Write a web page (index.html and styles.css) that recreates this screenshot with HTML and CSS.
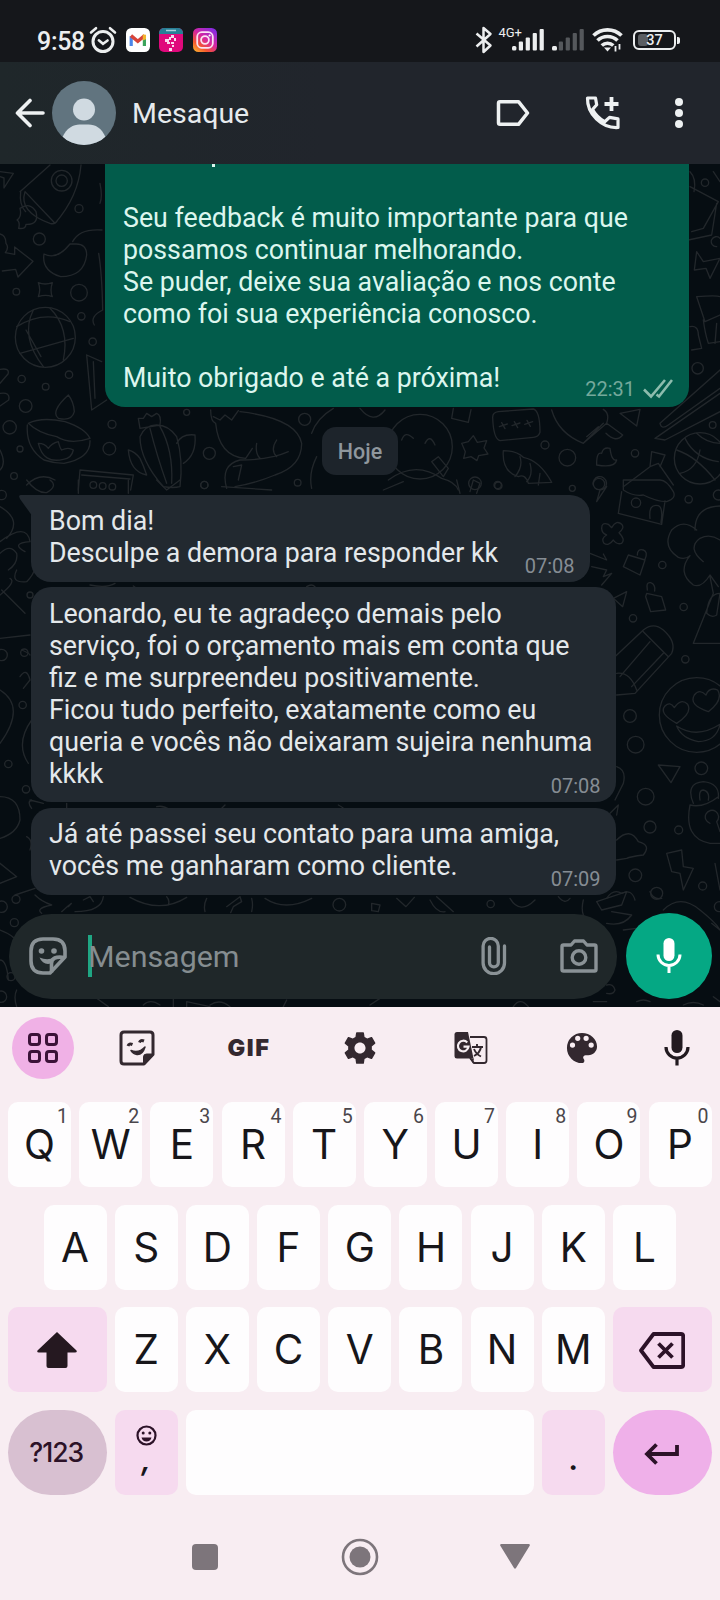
FILE: index.html
```html
<!DOCTYPE html>
<html lang="pt-BR">
<head>
<meta charset="utf-8">
<title>Mesaque</title>
<link rel="stylesheet" href="styles.css">
</head>
<body>
<div class="phone">
  <div class="status">
    <span class="clock">9:58</span>
    <svg class="st-alarm" width="28" height="28" viewBox="0 0 28 28" fill="none" stroke="#eceeef" stroke-linecap="round"><circle cx="14" cy="15.5" r="10" stroke-width="3"/><path d="M2 6.5l5-4.3M26 6.5l-5-4.3" stroke-width="2.6"/><path d="M9.8 14.2l4.2 3.6 4.6-3.4" stroke-width="2.5"/></svg>
    <svg class="st-app" width="24" height="24" viewBox="0 0 24 24"><rect width="24" height="24" rx="5.5" fill="#fff"/><path d="M5.2 18V8.2" stroke="#4b86e8" stroke-width="3.2"/><path d="M18.4 18V8.2" stroke="#3ba45c" stroke-width="3.2"/><path d="M5 7.6l6.8 5.6 6.8-5.6" stroke="#d8443a" stroke-width="3.4" fill="none"/><path d="M16.8 6.4l3.2.4v4.4l-3.2 1.4z" fill="#f2b52c"/></svg>
    <svg class="st-app" width="24" height="24" viewBox="0 0 24 24"><rect width="24" height="24" rx="5" fill="#e0097c"/><path d="M0 6V5a5 5 0 0 1 5-5h14a5 5 0 0 1 5 5v1z" fill="#277f96"/><path d="M7 2.5h10" stroke="#a8d4dc" stroke-width="1.5"/><path d="M12 7h3v3h-3zM6 11h4v3H6zM10 9h2v3h-2zM15 10h2v3h-2zM8 14h3v2H8zM12 14h3v2h-3zM13 17h2v2h-2zM10 20h3v3h-3z" fill="#fbd9ec"/></svg>
    <svg class="st-app" width="24" height="24" viewBox="0 0 24 24"><defs><linearGradient id="ig" x1="0" y1="1" x2=".75" y2="0"><stop offset="0" stop-color="#fdc02f"/><stop offset=".3" stop-color="#f5562f"/><stop offset=".6" stop-color="#d626a0"/><stop offset="1" stop-color="#8a2be0"/></linearGradient></defs><rect width="24" height="24" rx="5.5" fill="url(#ig)"/><g fill="none" stroke="#fbe3f3" stroke-width="1.8"><rect x="4.2" y="4.2" width="15.6" height="15.6" rx="4.5"/><circle cx="12" cy="12" r="3.9"/></g><circle cx="16.6" cy="7.5" r="1.1" fill="#fff"/></svg>
    <span class="spacer"></span>
    <svg width="18" height="28" viewBox="0 0 18 28" fill="none" stroke="#eceeef" stroke-width="2.5" stroke-linejoin="round"><path d="M1.5 7.5l14 12-7 6.5V2l7 6-14 12.5"/></svg>
    <span class="net">4G+</span>
    <svg class="bars" width="32" height="22" viewBox="0 0 32 22" fill="#eceeef"><rect y="17" width="4.400" height="4.5" rx="1.5"/><rect x="6.800" y="12.5" width="4.200" height="9" rx="1"/><rect x="13.700" y="8.5" width="4.200" height="13" rx="1"/><rect x="20.700" y="4" width="4.200" height="17.5" rx="1"/><rect x="27.600" width="4.200" height="21.500" rx="1"/></svg>
    <svg class="bars2" width="32" height="22" viewBox="0 0 32 22" fill="#55585c"><rect y="17" width="5" height="4.5" rx="1.500" fill="#eceeef"/><rect x="6.800" y="12.500" width="4.200" height="9" rx="1"/><rect x="13.700" y="8.500" width="4.200" height="13" rx="1"/><rect x="20.700" y="4" width="4.200" height="17.500" rx="1"/><rect x="27.600" width="4.200" height="21.500" rx="1"/></svg>
    <svg class="wifi" width="32" height="26" viewBox="0 0 32 26" fill="none" stroke="#eceeef" stroke-width="3.700"><path d="M1.500 8.500a20 20 0 0 1 28 0M5.500 13.500a14.500 14.500 0 0 1 20 0M9.800 18.500a8.500 8.500 0 0 1 11.500 0"/><path d="M12 20.500h7l-3.500 4z" fill="#eceeef" stroke="none"/><path d="M23.500 19v5.500M27.500 17v5.500" stroke-width="1.800"/></svg>
    <span class="battery"><span class="charge"></span><span class="pct">37</span></span><span class="nub"></span>
  </div>

  <div class="header">
    <svg class="back" width="30" height="30" viewBox="0 0 30 30" fill="none" stroke="#eef1f2" stroke-width="3.600" stroke-linecap="round" stroke-linejoin="round"><path d="M15 2.500L2.500 15 15 27.500M3 15h25"/></svg>
    <svg class="avatar" width="64" height="64" viewBox="0 0 64 64"><defs><clipPath id="av"><circle cx="32" cy="32" r="32"/></clipPath></defs><g clip-path="url(#av)"><rect width="64" height="64" fill="#61747f"/><circle cx="32" cy="28.500" r="11" fill="#d0dae1"/><path d="M10.500 56c4-9 11-12.500 17-12.500h9c7 0 13 3.500 17 12.500L44 64H20z" fill="#d0dae1"/></g></svg>
    <span class="name">Mesaque</span>
    <span class="spacer"></span>
    <svg class="h-label" width="34" height="28" viewBox="0 0 34 28" fill="none" stroke="#eef1f2" stroke-width="3.500" stroke-linejoin="round"><path d="M4 2.700h18.500L31.500 14l-9 11.300H4q-1.500 0-1.500-1.500V4.200Q2.500 2.700 4 2.700z"/></svg>
    <svg class="h-call" width="36" height="36" viewBox="0 0 36 36" fill="none" stroke="#eef1f2" stroke-width="3.200" stroke-linejoin="round"><path d="M2.500 3h8l1.200 6.800-4.200 4.700c3 5.500 6.500 9 12.200 12.200l4.800-4.300 8.500 1.500v8.600C17 33.500 2 19 2.500 3z"/><path d="M26.500 2v14M19.500 9h14" stroke-width="3.800"/></svg>
    <svg class="h-dots" width="10" height="32" viewBox="0 0 10 32" fill="#eef1f2"><circle cx="5" cy="5" r="4"/><circle cx="5" cy="16" r="4"/><circle cx="5" cy="27" r="4"/></svg>
  </div>

  <div class="chat">
    <svg class="wallpaper" width="720" height="843" viewBox="0 164 720 843" fill="none" stroke="#22272b" stroke-width="4" stroke-linejoin="round" stroke-linecap="round">
      <g transform="translate(0 160) scale(.33333)">
        <path d="M60 95L150 15M75 95l90 95q70-80 78-175M62 95q-5 40 15 60M75 95q-20 60 75 95q15 5 22-8"/><circle cx="185" cy="62" r="31"/><circle cx="185" cy="62" r="17"/><path d="M60 145q30-20 48 10 10 40-30 38 0 15-22 12 5-20-5-25 15-10 9-35zM0 35l40 5-28 44v-30L0 50"/>
        <circle cx="237" cy="146" r="12"/><circle cx="118" cy="237" r="18"/><path d="M0 222q18 4 18 28 10 12-2 28l28 5v-22l55 43-45 47-7-23-40 5"/><path d="M210 252q-40 50-78 30-8 50 50 68 70 0 78-65 0-35-35-33zM218 245q20-40 88-35M300 70q8 40 0 60M296 280q10 60 12 170-40 20-25 45"/>
        <path d="M115 368q20 8 42 0-8 24 0 42-20-8-42 0 8-22 0-42z"/><circle cx="237" cy="398" r="25"/><circle cx="49" cy="395" r="10"/><circle cx="244" cy="469" r="11"/><circle cx="278" cy="545" r="11"/><circle cx="136" cy="532" r="90"/><path d="M50 500q80-50 160-15M60 580l160-45M100 450q-40 80 30 170M150 445q60 60 40 155M78 510l45 80"/>
        <circle cx="65" cy="657" r="11"/><circle cx="137" cy="680" r="10"/><circle cx="207" cy="644" r="11"/><circle cx="77" cy="738" r="19"/><circle cx="29" cy="802" r="20"/><circle cx="60" cy="867" r="9"/><circle cx="336" cy="793" r="12"/><circle cx="328" cy="866" r="19"/><circle cx="42" cy="948" r="10"/><path d="M0 628q30-5 24 14L0 670M0 700q32-5 26 20l-26 18M260 585l15 165 45-30M260 585l45 20M280 605l5 110"/>
        <path d="M205 705q-55 50-30 70 40 10 48-20-2-30-18-50zM85 790q40-20 110-5 60 20 75 50-60 20-100-5-55-10-85-40zM82 795q-5 70 50 105 30 10 60 10 80-15 78-68M115 850q20 0 30 15 10-15 30-20 5 20 10 25 20-10 35 0-5 25-30 28-60 15-75-48zM0 870q20 40 0 60"/>
        <path d="M420 830q15-35 50-35 35 0 60 35 20 70 10 150-20 5-50 0-70-80-70-150zM450 805q20 80 50 165M480 800q40 70 35 170M415 775q5 30 5 30l60-10q5-30-10-35l-15 10-15-10-10 15zM530 850q15-30 55-25 5 60-35 85M385 870q20 5 35 25 10 20 20 50-50-10-55-75zM235 990l5-60 160 15-8 45M245 945l145 12"/><circle cx="280" cy="975" r="10"/><circle cx="308" cy="978" r="10"/><circle cx="337" cy="980" r="10"/><circle cx="628" cy="880" r="18"/><circle cx="560" cy="757" r="9"/><circle cx="914" cy="778" r="18"/><circle cx="613" cy="975" r="11"/><circle cx="893" cy="968" r="10"/>
        <path d="M632 750q0 35 15 40 10 100 90 105l20-30M640 770l20 10 15-15 20 15 20-28M720 755q170 20 185 95 0 70-80 95-60 25-120 35M680 985q-20-70 40-85 90 0 145-25M830 840q-20 30 0 50M700 920l25-5-10 45M770 850q-5 30 10 45M1000 745q-50 30-65 75M950 890q-25 50-15 95M80 975q40-40 85-15"/>
      </g>
      <g transform="translate(360 160) scale(.33333)">
        <circle cx="180" cy="860" r="97"/><path d="M125 840q10-30 35-5M195 850q15-30 30 5M215 905l20-15 30 35-15 25zM85 960q80-60 160-5 40 10 50 35M280 745l-5 30 50 12 8-38M0 745q40 50 75 5"/>
        <path d="M415 755l105-8q20 5 20 70-5 15-20 15l-100 10q-20-5-22-70 0-15 17-17zM418 800l24-8M425 788l10 18M456 797l24-8M463 785l10 18M494 793l24-8M501 781l10 18"/>
        <path d="M305 850l20-5 15-18 12 20 28-5-8 22 12 18-28 5-5 15-18-12-22 5 5-20zM575 750q20 70 95 100l70-60q10-30-10-42M670 850l60-60M680 830l35-30M740 790l48 35q-20 25-50-5M780 760l60-12-10 50z"/><circle cx="555" cy="855" r="12"/><circle cx="622" cy="893" r="25"/><circle cx="825" cy="880" r="11"/><circle cx="1058" cy="795" r="10"/><circle cx="1013" cy="625" r="17"/><circle cx="413" cy="975" r="11"/>
        <path d="M430 872q40 0 60 20 50 10 85 75l-70 3q-10-30-30-20-50-15-45-78zM480 890q10 30-15 60M510 910q10 35-10 55M540 940l-5 35M710 910q0-35 15-30 5-20 25-15 5 40 20 35-5 25-60 15z"/>
        <path d="M1080 630L900 790q5 20 25 5l155-110M1080 700L885 835l30 5 165-85"/><circle cx="1020" cy="895" r="77"/><path d="M950 870q60 20 115 90M975 835q30 60 100 70M1010 820q30 30 70 30M960 940q50-10 60-70M790 980l80-60 25-10 45 65M870 920l5-45 40 10-15 35"/><circle cx="717" cy="972" r="17"/><circle cx="345" cy="970" r="19"/>
        <path d="M990 80l85 45-45 80-35 10M985 240l70-15 15-95M990 35q20 20 12 60"/><circle cx="1035" cy="68" r="11"/><path d="M1060 35l20 30M1010 275l20 30 50-10-30 60-12-30-35 5zM1070 260a15 15 0 1 1 10-25M1010 410q60-5 70 0M1010 410l25 75 45-20M1030 480q5 40 15 70l35-5M1070 490l-5 60M990 500q25-5 25 25l10 40-30 5"/>
      </g>
      <g transform="translate(360 480) scale(.33333)">
        <path d="M790 30q30 20 60 15 40 20 70 20 30-10 20-30Q920 0 900 0H790zM785 35l-10 65 130 33 10-70M870 115q-5-45 25-38 15 5 8 50M70 30l60-25M290 0l10 40M330 35l10-35 20 10-10 30M700 15a20 20 0 1 1 20 15l-10 35 30-45M725 145q0-20 20-12l10 10q15-25 30-10 10 10-8 25 20 20 8 32-15 5-25-10-15 20-28 10-10-15 8-25-15-5-15-20z"/><circle cx="828" cy="68" r="14"/><circle cx="986" cy="58" r="11"/><circle cx="637" cy="25" r="9"/><circle cx="415" cy="17" r="11"/><circle cx="1075" cy="45" r="15"/>
        <path d="M1005 150q0-70 75-72M1010 150q-40-35-75 0-30 50 20 82 20 8 35-5-40 50 10 88 25 10 50-30l25 35M1030 245q-50-40-10-70 30-15 60 5M1050 290l10 50-60 150 80 0M1040 400q5-60 40-60l-10 65q-15 10-30-5z"/>
        <path d="M805 225l50 15-15 45-50-25zM832 225q0-20 18-15 15 5 5 28M860 340l45 10 12 40-45 5-15-45zM862 330q-5-25 10-22 15 5 12 25"/><circle cx="907" cy="255" r="11"/><circle cx="971" cy="381" r="11"/><circle cx="819" cy="415" r="11"/><circle cx="976" cy="538" r="11"/>
        <path d="M690 220l50 20-10-18M695 260l45 10-10 20 25-10-30 35M760 355l40-20-12 45zM760 535L850 450q30-25 60 0 40 35 25 70L825 640l-55 5M770 580q40-5 60 50M850 455l75 75M780 590l90-105M815 620l95-100"/>
        <circle cx="1010" cy="705" r="112"/><path d="M950 738q60 40 130-5-10 50-65 52-50-10-65-47zM950 730q-55-30-35-52 15-15 28 5 20-30 40-10 15 25-33 57zM1045 695q-60-20-42-50 15-20 35 0 10-25 35-15 18 30-28 65z"/>
        <circle cx="810" cy="708" r="19"/><circle cx="827" cy="794" r="25"/><circle cx="857" cy="950" r="25"/><circle cx="870" cy="1041" r="18"/><circle cx="956" cy="1050" r="12"/><circle cx="1024" cy="865" r="19"/><circle cx="826" cy="1186" r="19"/><circle cx="890" cy="1240" r="18"/><circle cx="1028" cy="1218" r="12"/><path d="M895 855l65 5-27 48zM1000 970q-25-60 30-65 50 5 45 50M1020 960q-5-30 10-30 20 5 15 30M990 975q40 10 85-25M990 975q-20 100 60 115h30M1050 1030a20 20 0 1 1 20-5l10 30"/>
        <path d="M770 860q30 10 20 50l-25 50M750 1000l25-25-5 30M770 1080q40-40 65 5 40 10 15 40-40 5-50 10l-30 5M920 1120l45-10 5 50 30 5-30 65-10-50-25-5zM740 1255q20-30 45-15 30-15 40 20M1065 1150l15 80"/>
      </g>
      <g transform="translate(0 480) scale(.33333)">
        <path d="M80 0q30 40 60 38 35-20 10-38M235 0v40M385 0v40M470 0l30 30 40-30M665 20l150 10M0 80q70 40 20 95M0 220q30-30 50 0 5 30-25 50M0 185q80-60 90 0-60 5-15 30M50 270q-20 40 30 35 20-20 25-40M0 345q50-40 30-50M0 475l90-10M75 400L5 330M65 510q25 10 25 15M60 590q20-30 30 10l-20 25M0 630q80 50 0 160M95 720q-50 70-10 130M0 950q60 0 60 70-10 40-60 55M90 960q20 5 40 10M95 985q-15-20 0-25M0 1150l50 40-50 20M45 1245l60-20M80 1070q20 10 10 40M270 315q50 10 75-5M400 318l35 25M920 320q15-10 25 0M200 970v20M660 990l15-15M470 980q20-5 40 10M1015 975q10 5 15 10"/><circle cx="5" cy="525" r="17"/><circle cx="73" cy="518" r="11"/><circle cx="68" cy="675" r="11"/><circle cx="25" cy="852" r="11"/><circle cx="78" cy="928" r="11"/><circle cx="90" cy="345" r="9"/><circle cx="5" cy="45" r="14"/><circle cx="613" cy="15" r="11"/>
      </g>
      <g transform="translate(0 890) scale(.33333)">
        <path d="M105 15q20 20 50 30-50 10-30 25M185 65q45-40 20-15M225 65q80 0 85-45M250 30l20-10 10 15M390 22q90 50 170 0M500 20q10 10 5 25M620 25q-10 20-5 40M680 50l40-30 5 15-25 15-8 18M755 25q5 20 0 40M795 25q60 40 140 0M0 120q50 20 45 35M0 210q20 0 25 60M50 300q-10 20 0 50M290 325l35 25M430 345q20-20 50 0M560 350v-15l70 15M860 330l-10 20M520 325v25M630 345q30-20 60 5"/><circle cx="1018" cy="44" r="19"/><circle cx="5" cy="50" r="17"/><circle cx="48" cy="28" r="12"/><circle cx="43" cy="98" r="12"/><circle cx="33" cy="260" r="12"/><circle cx="3" cy="320" r="17"/>
      </g>
      <g transform="translate(360 890) scale(.33333)">
        <path d="M35 40l25 5-5 20-20-3zM110 25l28 25 25-28M210 30q20 40 45 35M230 20l50 45M450 25q30 50 75 5M595 20q20 25 35 5M710 35l90-30-15 40-60 15zM670 30q-10 40 10 60M740 100q50 10 75-25l-60-10M790 120l40-5M910 60q50-50 110 0 50 40 60 60M1055 100l25 20M870 5q10 25 35 20M1060 320l20 15M740 285q20-5 25 15-5 15-25 10M700 335h40M830 335q20-10 40 0M970 345q30-15 60 0M460 350q20-30 45 0M60 325l-30 20"/><circle cx="392" cy="42" r="11"/><circle cx="1078" cy="50" r="15"/>
      </g>
    </svg>

    <div class="bubble out">
      <span class="cut"></span>
      <p>Seu feedback é muito importante para que<br>possamos continuar melhorando.<br>Se puder, deixe sua avaliação e nos conte<br>como foi sua experiência conosco.<br><br>Muito obrigado e até a próxima!</p>
      <span class="meta">22:31<svg width="30" height="20" viewBox="0 0 30 20" fill="none" stroke="#8dbcad" stroke-width="2.600"><path d="M1 10.500l7 7L22 1M13.500 15.500l2.500 2L29 1"/></svg></span>
    </div>
    <div class="day">Hoje</div>
    <div class="bubble in first">
      <svg class="tail" width="14" height="22" viewBox="0 0 14 22"><path d="M2 0h12v22L1 4Q-1 0 2 0z" fill="#222930"/></svg>
      <p>Bom dia!<br>Desculpe a demora para responder kk</p>
      <span class="meta">07:08</span>
    </div>
    <div class="bubble in second">
      <p>Leonardo, eu te agradeço demais pelo<br>serviço, foi o orçamento mais em conta que<br>fiz e me surpreendeu positivamente.<br>Ficou tudo perfeito, exatamente como eu<br>queria e vocês não deixaram sujeira nenhuma<br>kkkk</p>
      <span class="meta">07:08</span>
    </div>
    <div class="bubble in third">
      <p>Já até passei seu contato para uma amiga,<br>vocês me ganharam como cliente.</p>
      <span class="meta">07:09</span>
    </div>
    <div class="composer">
      <div class="field">
        <svg width="38" height="38" viewBox="0 0 38 38" fill="none" stroke="#8a9296" stroke-width="3.600" stroke-linejoin="round"><path d="M14 2h10q12 0 12 12v6L21 36h-7Q2 36 2 24V14Q2 2 14 2z"/><path d="M35.500 20.500q-13-2-13 6v9" /><path d="M10.500 20.500q8 3.500 14.500 0l-3 6q-8 2-11.500-6z" fill="#8a9296" stroke="none"/><g fill="#8a9296" stroke="none"><circle cx="12.500" cy="14" r="2.800"/><circle cx="25" cy="14" r="2.800"/></g></svg>
        <span class="caret"></span><span class="hint">Mensagem</span>
        <span class="spacer"></span>
        <svg class="clip" width="26" height="38" viewBox="0 0 26 38" fill="none" stroke="#8a9296" stroke-width="3.300" stroke-linecap="round"><path d="M23.500 9v17a10.700 10.700 0 0 1-21.400 0V9a7.600 7.600 0 0 1 15.200 0v16.500a4.400 4.400 0 0 1-8.800 0V10"/></svg>
        <svg class="cam" width="38" height="34" viewBox="0 0 38 34" fill="none" stroke="#8a9296" stroke-width="3.400" stroke-linejoin="round"><path d="M3.500 6H11l3.500-4h9L27 6h7.500q1.500 0 1.500 1.500v23q0 1.500-1.500 1.500h-31Q2 32 2 30.500v-23Q2 6 3.500 6z"/><circle cx="19" cy="18.500" r="6.800"/></svg>
      </div>
      <div class="mic"><svg width="26" height="36" viewBox="0 0 26 36"><rect x="7.500" y="0" width="11" height="23" rx="5.500" fill="#fff"/><path d="M2 16.500a11 11 0 0 0 22 0M13 27.500V35" fill="none" stroke="#fff" stroke-width="3"/></svg></div>
    </div>
  </div>

  <div class="keyboard">
    <div class="tools">
      <span class="apps"><svg width="30" height="30" viewBox="0 0 30 30" fill="none" stroke="#3b1238" stroke-width="3"><rect x="1.500" y="1.500" width="10" height="10" rx="2.500"/><rect x="18.500" y="1.500" width="10" height="10" rx="2.500"/><rect x="1.500" y="18.500" width="10" height="10" rx="2.500"/><rect x="18.500" y="18.500" width="10" height="10" rx="2.500"/></svg></span>
      <svg width="36" height="36" viewBox="0 0 36 36" fill="none" stroke="#33282f" stroke-width="3" stroke-linejoin="round"><path d="M5 2h26q3 0 3 3v19.500L25 34H5q-3 0-3-3V5q0-3 3-3z"/><path d="M34 24h-6.500q-3 0-3 3v7z" fill="#33282f" stroke-width="1"/><path d="M12 20.500q8 3 14-3.500-2.500 8-8 7.500-3.500-.5-6-4z" fill="#33282f" stroke-width="1.500"/><path d="M9 16q1-3 4.500-1.500M20.500 12.500q1-3 4.500-1.500" stroke-width="3"/></svg>
      <span class="gif">GIF</span>
      <svg class="gear" width="38" height="38" viewBox="0 0 24 24" fill="#33282f"><path d="M19.430 12.980c.040-.320.070-.640.070-.980s-.030-.660-.070-.980l2.110-1.650c.190-.150.240-.420.120-.640l-2-3.460c-.120-.220-.390-.300-.610-.220l-2.490 1c-.520-.400-1.080-.730-1.690-.980l-.380-2.650C14.460 2.180 14.250 2 14 2h-4c-.250 0-.460.180-.490.420l-.380 2.650c-.610.250-1.170.590-1.690.980l-2.490-1c-.230-.090-.490 0-.610.220l-2 3.460c-.130.220-.070.490.120.640l2.110 1.650c-.040.320-.070.650-.070.980s.030.660.070.980l-2.110 1.650c-.190.150-.240.420-.120.640l2 3.460c.120.220.390.300.610.220l2.490-1c.520.400 1.080.730 1.690.980l.380 2.650c.030.240.240.420.490.420h4c.250 0 .460-.180.490-.420l.380-2.650c.610-.250 1.170-.590 1.690-.980l2.490 1c.230.090.490 0 .610-.220l2-3.460c.120-.220.070-.490-.120-.640l-2.110-1.650zM12 15.500c-1.930 0-3.500-1.570-3.500-3.500s1.570-3.500 3.500-3.500 3.500 1.570 3.500 3.500-1.570 3.500-3.500 3.500z"/></svg>
      <svg width="34" height="34" viewBox="0 0 34 34" fill="none"><path d="M16 6h14q2.500 0 2.500 2.500v21q0 2.500-2.500 2.500H20l-4-5" stroke="#33282f" stroke-width="1.800"/><path d="M3 1h11l5.500 26.500H3q-2.500 0-2.500-2.500V3.500Q.5 1 3 1z" fill="#33282f"/><path d="M16 27.500h4l-1 5z" fill="#33282f"/><path d="M13.200 11.500a5.300 5.300 0 1 0 1.300 4.200H9.500" stroke="#f6eef2" stroke-width="2.200"/><path d="M18 16h11M23 13v3M20 25q6-3 7-9M20 18q2 5 7 7.500" stroke="#33282f" stroke-width="1.900"/></svg>
      <svg width="38" height="38" viewBox="0 0 24 24" fill="#33282f"><path d="M12 2.500a9.500 9.500 0 0 0 0 19c.900 0 1.500-.700 1.500-1.500 0-.400-.150-.740-.390-1.010-.230-.260-.380-.610-.380-.990 0-.830.670-1.500 1.500-1.500H16c3.030 0 5.500-2.470 5.500-5.500 0-4.690-4.310-8.500-9.500-8.500zm-6 9.300a1.650 1.650 0 1 1 0-3.300 1.650 1.650 0 0 1 0 3.300zm3.300-4.300a1.650 1.650 0 1 1 0-3.300 1.650 1.650 0 0 1 0 3.300zm5.300 0a1.650 1.650 0 1 1 0-3.300 1.650 1.650 0 0 1 0 3.300zm3.200 4.300a1.650 1.650 0 1 1 0-3.300 1.650 1.650 0 0 1 0 3.300z"/></svg>
      <svg width="26" height="36" viewBox="0 0 26 36"><rect x="7.500" y="0" width="11" height="23" rx="5.500" fill="#221a20"/><path d="M2 17a11 11 0 0 0 22 0M13 28v7.500" fill="none" stroke="#221a20" stroke-width="3.200"/></svg>
    </div>
    <div class="rows">
      <div class="row"><div class="key">Q<i>1</i></div><div class="key">W<i>2</i></div><div class="key">E<i>3</i></div><div class="key">R<i>4</i></div><div class="key">T<i>5</i></div><div class="key">Y<i>6</i></div><div class="key">U<i>7</i></div><div class="key">I<i>8</i></div><div class="key">O<i>9</i></div><div class="key">P<i>0</i></div></div>
      <div class="row inset"><div class="key">A</div><div class="key">S</div><div class="key">D</div><div class="key">F</div><div class="key">G</div><div class="key">H</div><div class="key">J</div><div class="key">K</div><div class="key">L</div></div>
      <div class="row">
        <div class="key mod wide"><svg width="40" height="36" viewBox="0 0 40 36" fill="#251820"><path d="M20 0l19.500 18.500q1 2-1.500 2h-7.500V34q0 2-2 2h-17q-2 0-2-2V20.500H2q-2.500 0-1.500-2z"/></svg></div>
        <div class="key">Z</div><div class="key">X</div><div class="key">C</div><div class="key">V</div><div class="key">B</div><div class="key">N</div><div class="key">M</div>
        <div class="key mod wide"><svg width="46" height="37" viewBox="0 0 46 37" fill="none" stroke="#2c1228" stroke-width="3.800" stroke-linejoin="round"><path d="M14.500 2H42q2.200 0 2.200 2.200v28.600Q44.200 35 42 35H14.500L2 18.500z"/><path d="M19.500 11.500l14 14M33.500 11.500l-14 14"/></svg></div>
      </div>
      <div class="row">
        <div class="key sym wide">?123</div>
        <div class="key mod comma"><svg width="21" height="21" viewBox="0 0 21 21" fill="none" stroke="#2c1228" stroke-width="2.200"><circle cx="10.500" cy="10.500" r="9"/><path d="M5.500 12.500h10q-1 4-5 4t-5-4z" fill="#2c1228" stroke="none"/><g fill="#2c1228" stroke="none"><circle cx="7.200" cy="8" r="1.500"/><circle cx="13.800" cy="8" r="1.500"/></g></svg><span>,</span></div>
        <div class="key space"></div>
        <div class="key mod period"><span>.</span></div>
        <div class="key enter wide"><svg width="36" height="22" viewBox="0 0 36 22" fill="none" stroke="#2c1228" stroke-width="3.800"><path d="M12.500 1.500L3 11l9.500 9.500M3 11h30V2"/></svg></div>
      </div>
    </div>
    <div class="nav">
      <svg width="26" height="26" viewBox="0 0 26 26"><rect width="26" height="26" rx="4" fill="#7d757b"/></svg>
      <svg width="38" height="38" viewBox="0 0 38 38"><circle cx="19" cy="19" r="17" fill="none" stroke="#7d757b" stroke-width="2.600"/><circle cx="19" cy="19" r="10.500" fill="#7d757b"/></svg>
      <svg width="30" height="25" viewBox="0 0 30 25"><path d="M1 0h28q1.500.5.500 2L16 24q-1 1.500-2 0L.5 2Q-.5.500 1 0z" fill="#7d757b"/></svg>
    </div>
  </div>
</div>
</body>
</html>
```

FILE: styles.css
```css
* { box-sizing: border-box; }
body { margin: 0; font-family: Roboto, "Liberation Sans", sans-serif; }
svg { display: block; flex: none; }
p { margin: 0; }
.phone { width: 720px; height: 1600px; display: flex; flex-direction: column; overflow: hidden; background: #060d12; }
.spacer { flex: 1; }

.status { height: 62px; flex: none; background: #15171b; display: flex; align-items: center; padding: 18px 40px 0 37px; color: #eceeef; }
.clock { font-size: 25px; font-weight: 500; line-height: 30px; width: 52px; margin-top: 4px; white-space: nowrap; letter-spacing: -.3px; }
.st-alarm { margin-right: 8.500px; }
.st-app { margin-right: 9.500px; }
.net { font-size: 13px; line-height: 13px; align-self: flex-start; margin: 8px -10px 0 5px; }
.bars2 { margin-left: 8px; }
.wifi { margin: 0 9px 0 8px; }
.battery { position: relative; width: 43px; height: 20px; border: 2px solid #eceeef; border-radius: 6px; display: flex; align-items: center; justify-content: center; font-size: 14.500px; font-weight: 500; }
.charge { position: absolute; left: 3px; top: 2px; width: 10px; height: 12px; background: #5b5e62; border-radius: 3px; }
.pct { position: relative; }
.nub { width: 3px; height: 7px; margin-left: 1px; background: #eceeef; border-radius: 0 2px 2px 0; }

.header { height: 102px; flex: none; background: linear-gradient(90deg, #1f272a, #21252c 45%); display: flex; align-items: center; padding: 0 36px 0 15px; }
.avatar { margin-left: 7px; }
.name { margin-left: 16px; font-size: 28.500px; color: #e6eaed; line-height: 34px; margin-top: 1px; }
.h-call { margin: 0 53px 0 55px; }

.chat { position: relative; height: 843px; flex: none; overflow: hidden; display: flex; flex-direction: column; align-items: flex-start; }
.wallpaper { position: absolute; left: 0; top: 0; }
.bubble { position: relative; color: #e4e8eb; font-size: 26.780px; line-height: 32px; border-radius: 20px; white-space: nowrap; }
.out { width: 584px; height: 243px; margin-left: 104.500px; background: #025c4b; border-radius: 0 0 20px 20px; padding: 37.500px 0 0 18.500px; color: #dcf6ee; }
.cut { position: absolute; left: 107px; top: 0; width: 3px; height: 3px; background: #dcf6ee; }
.in { background: #222930; padding: 10px 0 0 18px; margin-left: 31px; width: 585px; height: 87px; }
.first { width: 559px; border-top-left-radius: 0; }
.second { height: 215px; margin-top: 5px; padding-top: 10.500px; }
.third { margin-top: 6px; }
.tail { position: absolute; left: -12px; top: 0; }
.meta { position: absolute; right: 15.500px; bottom: 4px; font-size: 20px; line-height: 24px; color: #868d94; display: flex; align-items: center; gap: 8px; }
.out .meta { color: #75a99b; bottom: 6px; }
.day { margin: 20px 0 20px 322px; width: 76px; height: 48px; border-radius: 14px; background: #1d242b; color: #8f979d; font-size: 21.500px; font-weight: 500; line-height: 49px; text-align: center; position: relative; }
.composer { position: relative; display: flex; margin: 18px 0 0 9px; gap: 9px; align-items: center; }
.field { width: 608px; height: 85px; border-radius: 43px; background: #1f2729; display: flex; align-items: center; padding: 0 19px 0 20px; }
.caret { width: 4px; height: 42px; background: #1fa683; margin-left: 21px; }
.hint { font-size: 30.400px; line-height: 36px; color: #858d90; margin: 2px 0 0 -4px; }
.clip { margin-right: 53px; }
.mic { width: 86px; height: 86px; border-radius: 50%; background: #05a884; display: flex; align-items: center; justify-content: center; }

.keyboard { flex: 1; background: #f8edf2; display: flex; flex-direction: column; }
.tools { height: 80px; padding-top: 1px; display: grid; grid-template-columns: 85px 104px 118px 105px 118px 104px 86px; align-items: center; justify-items: center; }
.apps { width: 62px; height: 62px; border-radius: 50%; background: #f0b1e6; display: flex; align-items: center; justify-content: center; }
.gif { font: 900 23.500px/30px Inter, sans-serif; color: #33282f; letter-spacing: 1.500px; margin-left: 2px; }
.rows { display: flex; flex-direction: column; gap: 17.500px; padding: 15px 8.500px 0 8px; }
.row { display: flex; gap: 8.200px; height: 85px; }
.inset { padding: 0 35.500px; }
.key { position: relative; flex: 1 1 0; background: #fefdfe; border-radius: 10px; display: flex; align-items: center; justify-content: center; font: 380 40.500px/50px Inter, Roboto, sans-serif; color: #17161a; padding-top: 1px; }
.key i { position: absolute; right: 3px; top: 4px; font: 400 19.500px/22px Roboto, sans-serif; color: #4a464b; }
.wide { flex: 0 0 98.500px; }
.mod { background: #f6daef; }
.sym { background: #d8c0d1; border-radius: 43px; font-size: 26.500px; font-weight: 500; color: #2c1228; letter-spacing: -1px; padding: 0 2px 0 0; }
.comma, .period { flex: 0 0 63px; flex-direction: column; justify-content: flex-start; padding-top: 15px; }
.comma span { font-style: italic; font-size: 30px; font-weight: 600; line-height: 36px; margin-top: -5px; }
.period span { font-size: 31px; font-weight: 600; line-height: 36px; margin-top: 16px; }
.enter { background: #efb0e9; border-radius: 43px; padding-top: 3px; }
.nav { flex: 1; display: grid; grid-template-columns: 155px 155px 155px; justify-content: center; justify-items: center; align-items: center; margin-top: 19px; padding-right: 1px; }
```
